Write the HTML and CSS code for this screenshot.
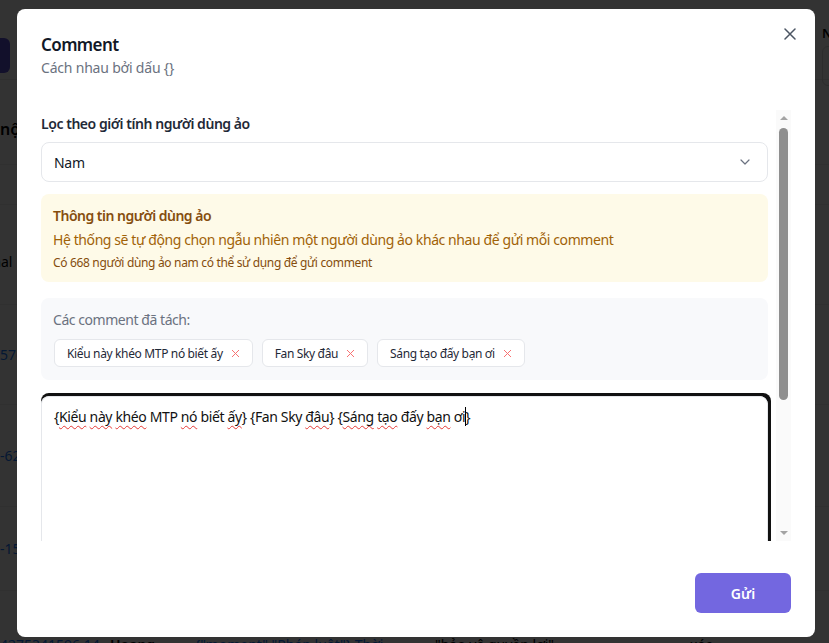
FILE: index.html
```html
<!DOCTYPE html>
<html lang="vi">
<head>
<meta charset="utf-8">
<title>Comment</title>
<link rel="stylesheet" href="styles.css">
</head>
<body>
<div class="page">
  <div class="page-toolbar">
    <div class="page-btn"></div>
    <div class="page-filter">
      <div class="page-filter-label">Ngày tạo</div>
      <div class="page-filter-input"></div>
    </div>
  </div>
  <div class="row row-head"><span class="cell-head">nội dung</span></div>
  <div class="row row-a"></div>
  <div class="row row-b"><span class="cell-text shift">Normal</span></div>
  <div class="row row-c"><span class="cell-link">5762081</span></div>
  <div class="row row-d"><span class="cell-link">-6214</span></div>
  <div class="row row-e"><span class="cell-link">-1557</span></div>
  <div class="row row-f">
    <span class="cell-link c1">4275341596 14</span>
    <span class="cell-text c2">Hoang</span>
    <span class="cell-link c3">{"moment","Pháp luật"} Thời</span>
    <span class="cell-text c4">"bảo vệ quyền lợi"</span>
    <span class="cell-text c5">xác</span>
  </div>
</div>
<div class="overlay"></div>

<div class="modal">
  <div class="modal-header">
    <h2 class="modal-title">Comment</h2>
    <p class="modal-subtitle">Cách nhau bởi dấu {}</p>
    <button class="modal-close" aria-label="Close">
      <svg width="12" height="12" viewBox="0 0 12 12"><path d="M1 1L11 11M11 1L1 11" stroke="#4b5563" stroke-width="1.5" stroke-linecap="round" fill="none"/></svg>
    </button>
  </div>

  <div class="modal-body">
    <div class="body-content">
      <div class="field-label">Lọc theo giới tính người dùng ảo</div>
      <div class="select">
        <span>Nam</span>
        <svg width="10" height="6" viewBox="0 0 10 6"><path d="M1 1L5 5L9 1" stroke="#6b7280" stroke-width="1.2" fill="none" stroke-linecap="round" stroke-linejoin="round"/></svg>
      </div>

      <div class="notice">
        <div class="notice-title">Thông tin người dùng ảo</div>
        <div class="notice-text">Hệ thống sẽ tự động chọn ngẫu nhiên một người dùng ảo khác nhau để gửi mỗi comment</div>
        <div class="notice-note">Có 668 người dùng ảo nam có thể sử dụng để gửi comment</div>
      </div>

      <div class="tags-box">
        <div class="tags-label">Các comment đã tách:</div>
        <div class="tags">
          <span class="tag">Kiểu này khéo MTP nó biết ấy<svg width="9" height="9" viewBox="0 0 9 9"><path d="M1 1L8 8M8 1L1 8" stroke="#f87171" stroke-width="1" fill="none"/></svg></span>
          <span class="tag">Fan Sky đâu<svg width="9" height="9" viewBox="0 0 9 9"><path d="M1 1L8 8M8 1L1 8" stroke="#f87171" stroke-width="1" fill="none"/></svg></span>
          <span class="tag">Sáng tạo đấy bạn ơi<svg width="9" height="9" viewBox="0 0 9 9"><path d="M1 1L8 8M8 1L1 8" stroke="#f87171" stroke-width="1" fill="none"/></svg></span>
        </div>
      </div>

      <div class="editor">{<span class="sp">Kiểu</span> <span class="sp">này</span> <span class="sp">khéo</span> MTP <span class="sp">nó</span> biết <span class="sp">ấy</span>} {Fan Sky <span class="sp">đâu</span>} {<span class="sp">Sáng</span> <span class="sp">tạo</span> đấy <span class="sp">bạn</span> ơi<span class="caret"></span>}</div>
    </div>
    <div class="scrollbar">
      <span class="sb-up"></span>
      <span class="sb-thumb"></span>
      <span class="sb-down"></span>
    </div>
  </div>

  <div class="modal-footer">
    <button class="btn-send">Gửi</button>
  </div>
</div>
</body>
</html>
```

FILE: styles.css
```css
* { box-sizing: border-box; }
html, body { margin: 0; padding: 0; }
body {
  width: 829px;
  height: 643px;
  overflow: hidden;
  position: relative;
  background: #fff;
  font-family: "Noto Sans", "Open Sans", sans-serif;
}

/* underlying page */
.page { width: 829px; }
.page-toolbar {
  display: flex;
  justify-content: space-between;
  align-items: flex-start;
  height: 80px;
  border-bottom: 1px solid #ececec;
}
.page-btn {
  margin-top: 38px;
  margin-left: -50px;
  width: 60px;
  height: 35px;
  border-radius: 6px;
  background: #5b4fd6;
}
.page-filter {
  margin-top: 26px;
  width: 80px;
  margin-right: -73px;
}
.page-filter-label { font-size: 13px; font-weight: 600; color: #000; line-height: 14px; white-space: nowrap; }
.page-filter-input { margin-top: 6px; height: 40px; border: 1px solid #d9d9d9; border-radius: 6px; }
.row {
  display: flex;
  align-items: center;
  border-bottom: 1px solid #eeeeee;
  font-size: 14px;
  white-space: nowrap;
}
.row-head { height: 85px; padding-top: 14px; }
.cell-head { font-size: 16px; font-weight: 600; color: #000; width: 17px; overflow: hidden; }
.row-a { height: 40px; }
.row-b { height: 100px; padding-top: 14px; }
.row-c { height: 100px; }
.row-d { height: 102px; }
.row-e { height: 84px; }
.row-f { height: 80px; align-items: flex-start; padding-top: 44px; }
.cell-text { color: #000; }
.cell-link { color: #1677ff; }
.shift { margin-left: -37px; }
.c1 { width: 110px; }
.c2 { width: 85px; font-weight: 600; }
.c3 { width: 240px; }
.c4 { width: 255px; }

.overlay {
  position: absolute;
  inset: 0;
  background: rgba(0, 0, 0, 0.8);
}

/* modal */
.modal {
  position: absolute;
  left: 17px;
  top: 9px;
  width: 798px;
  height: 628px;
  background: #fff;
  border-radius: 8px;
  padding: 24px;
  display: flex;
  flex-direction: column;
}
.modal-header { position: relative; }
.modal-title {
  margin: 0;
  font-size: 17px;
  line-height: 24px;
  font-weight: 600;
  letter-spacing: -0.6px;
  color: #111827;
}
.modal-subtitle {
  margin: 1px 0 0;
  font-size: 14px;
  line-height: 20px;
  letter-spacing: -0.2px;
  color: #6b7280;
}
.modal-close {
  position: absolute;
  top: -11px;
  right: -11px;
  width: 24px;
  height: 24px;
  border: 0;
  padding: 0;
  background: transparent;
  display: flex;
  align-items: center;
  justify-content: center;
}

.modal-body {
  margin-top: 32px;
  height: 431px;
  display: flex;
}
.body-content {
  flex: 1;
  overflow: hidden;
  padding: 4px 8px 0 0;
}
.field-label {
  font-size: 14px;
  font-weight: 600;
  line-height: 20px;
  letter-spacing: -0.45px;
  color: #1f2937;
  margin-bottom: 8px;
}
.select {
  height: 40px;
  border: 1px solid #e5e7eb;
  border-radius: 8px;
  display: flex;
  align-items: center;
  justify-content: space-between;
  padding: 0 17px 0 12px;
  font-size: 14px;
  letter-spacing: -0.3px;
  color: #111827;
}
.notice {
  margin-top: 12px;
  background: #fefae8;
  border-radius: 8px;
  padding: 12px 12px 10px;
}
.notice-title { font-size: 14px; font-weight: 600; line-height: 20px; letter-spacing: -0.5px; color: #854d0e; }
.notice-text { margin-top: 4px; font-size: 14px; line-height: 20px; letter-spacing: -0.41px; color: #a16207; }
.notice-note { margin-top: 4px; font-size: 12px; line-height: 18px; letter-spacing: -0.33px; color: #854d0e; }

.tags-box {
  margin-top: 16px;
  background: #f8f9fb;
  border-radius: 8px;
  padding: 12px 12px 13px;
}
.tags-label { font-size: 14px; line-height: 20px; letter-spacing: -0.45px; color: #6b7280; }
.tags { margin-top: 9px; margin-left: 1px; display: flex; gap: 9px; }
.tag {
  height: 28px;
  display: inline-flex;
  align-items: center;
  gap: 8px;
  padding: 0 12px;
  background: #fff;
  border: 1px solid #e5e7eb;
  border-radius: 6px;
  font-size: 12px;
  letter-spacing: -0.35px;
  color: #1f2937;
}

.editor {
  margin-top: 16px;
  height: 170px;
  border: 1px solid #e5e7eb;
  border-radius: 8px;
  box-shadow: 0 -3px 0 #111, 3px 0 0 #111, 3px -3px 0 #111;
  padding: 9px 12px;
  font-size: 14px;
  line-height: 22px;
  letter-spacing: -0.37px;
  color: #111;
}
.sp {
  text-decoration: underline wavy #e53935;
  text-decoration-thickness: 1px;
  text-underline-offset: 3px;
}
.caret {
  display: inline-block;
  width: 1px;
  height: 19px;
  background: #000;
  vertical-align: -4px;
  margin-right: -1px;
}

.scrollbar {
  width: 15px;
  background: #fafafa;
  display: flex;
  flex-direction: column;
  align-items: center;
  padding: 6px 0;
}
.sb-up {
  width: 0;
  height: 0;
  border-left: 4px solid transparent;
  border-right: 4px solid transparent;
  border-bottom: 4px solid #a3a3a3;
}
.sb-thumb {
  margin-top: 8px;
  width: 9px;
  height: 272px;
  border-radius: 5px;
  background: #8f8f8f;
}
.sb-down {
  margin-top: auto;
  width: 0;
  height: 0;
  border-left: 4px solid transparent;
  border-right: 4px solid transparent;
  border-top: 4px solid #a3a3a3;
}

.modal-footer {
  margin-top: 32px;
  display: flex;
  justify-content: flex-end;
}
.btn-send {
  width: 96px;
  height: 40px;
  border: 0;
  border-radius: 6px;
  background: #7367e0;
  color: #fff;
  font-family: inherit;
  font-size: 14px;
  font-weight: 600;
}
```
